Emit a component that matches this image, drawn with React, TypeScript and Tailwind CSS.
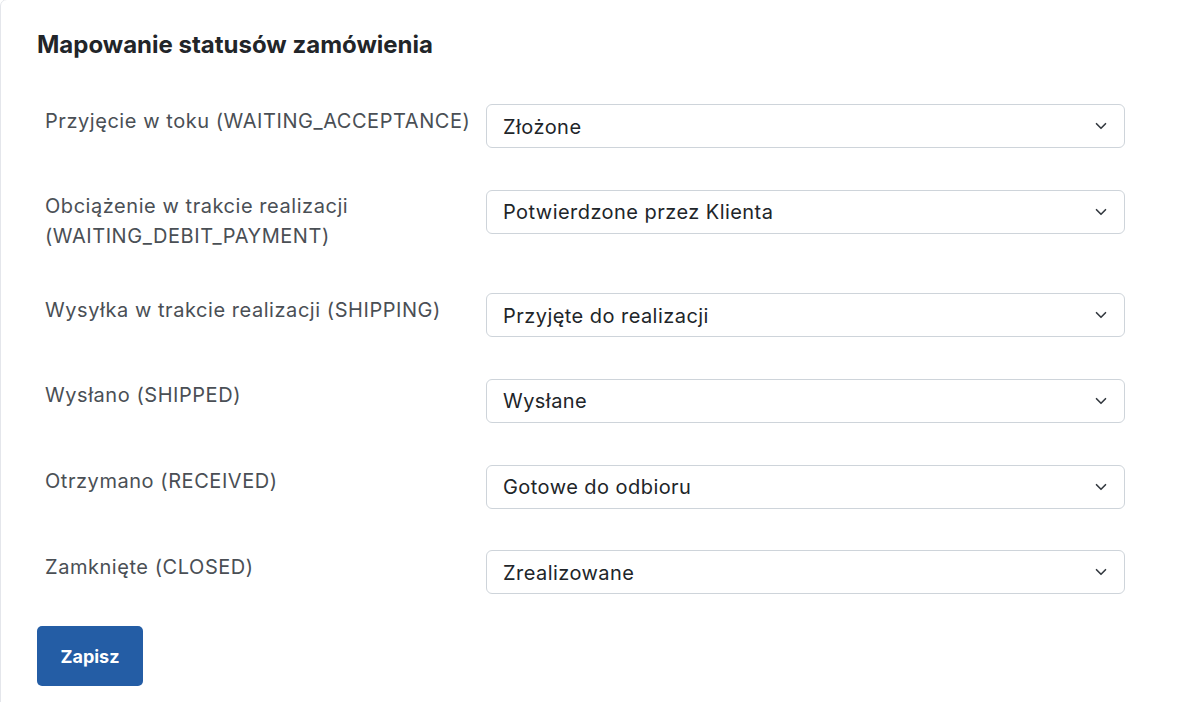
import React from "react";

type Mapping = {
  label: string;
  value: string;
};

const mappings: Mapping[] = [
  { label: "Przyjęcie w toku (WAITING_ACCEPTANCE)", value: "Złożone" },
  {
    label: "Obciążenie w trakcie realizacji (WAITING_DEBIT_PAYMENT)",
    value: "Potwierdzone przez Klienta",
  },
  { label: "Wysyłka w trakcie realizacji (SHIPPING)", value: "Przyjęte do realizacji" },
  { label: "Wysłano (SHIPPED)", value: "Wysłane" },
  { label: "Otrzymano (RECEIVED)", value: "Gotowe do odbioru" },
  { label: "Zamknięte (CLOSED)", value: "Zrealizowane" },
];

function SelectBox({ value }: { value: string }) {
  return (
    <div className="relative flex items-center h-[44px] w-full rounded-[6px] border border-[#ced4da] bg-white pl-[16px] pr-[40px] pt-[2px]">
      <span className="text-[20px] leading-[27px] tracking-[0.45px] text-[#212529]">{value}</span>
      <svg
        className="absolute right-[15px] top-1/2 -translate-y-1/2"
        width="16"
        height="12"
        viewBox="0 0 16 16"
        fill="none"
        stroke="#343a40"
        strokeWidth="2.2"
        strokeLinecap="round"
        strokeLinejoin="round"
      >
        <path d="m2 5 6 6 6-6" />
      </svg>
    </div>
  );
}

function App() {
  return (
    <div
      className="w-[1177px] h-[702px] overflow-hidden bg-white"
      style={{ fontFamily: "Inter, 'Noto Sans', sans-serif" }}
    >
      <div className="-mt-px w-[1220px] h-[760px] rounded-[7px] border border-[#e4e6eb] bg-white pl-[36px] pt-[30px]">
        <h2 className="text-[24px] leading-[29px] font-bold text-[#222529] mb-[45px]">
          Mapowanie statusów zamówienia
        </h2>
        <div className="flex flex-col gap-[41.8px] w-[1096px]">
          {mappings.map((m) => (
            <div key={m.label} className="flex items-start">
              <div className="w-[441px] shrink-0 pl-[8px] pt-[1.5px] text-[20px] leading-[30px] tracking-[0.55px] text-[#4a4f55]">
                {m.label}
              </div>
              <div className="flex-1 px-[8px]">
                <SelectBox value={m.value} />
              </div>
            </div>
          ))}
        </div>
        <button className="mt-[32px] h-[60px] w-[106px] rounded-[5px] bg-[#245da5] text-[18px] font-bold text-white">
          Zapisz
        </button>
      </div>
    </div>
  );
}

export default App;
